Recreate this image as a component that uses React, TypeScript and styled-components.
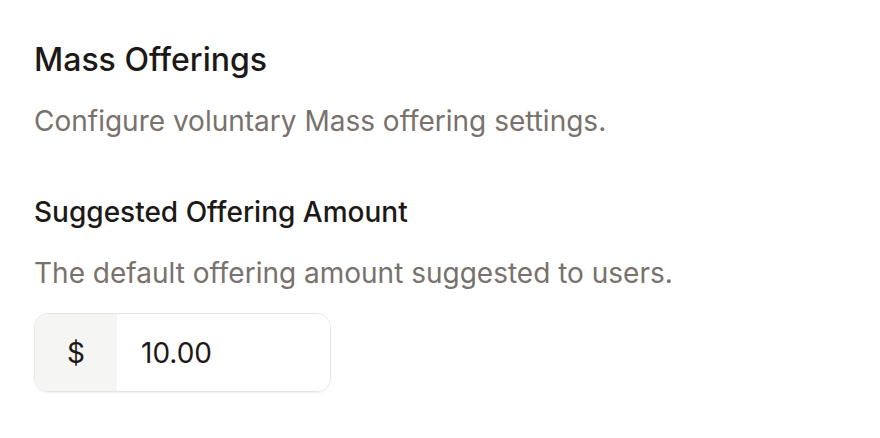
import styled, { createGlobalStyle } from 'styled-components';

const GlobalStyle = createGlobalStyle`
  html, body {
    margin: 0;
    padding: 0;
    background: #ffffff;
  }
  body {
    font-family: Inter, 'Noto Sans', sans-serif;
    -webkit-font-smoothing: antialiased;
  }
`;

const Section = styled.section`
  display: flex;
  flex-direction: column;
  padding: 40px 34px;
`;

const Title = styled.h2`
  margin: 0;
  font-size: 32px;
  line-height: 40px;
  font-weight: 500;
  color: #1c1917;
`;

const Description = styled.p`
  margin: 23px 0 0;
  font-size: 28px;
  line-height: 36px;
  font-weight: 400;
  color: #78716c;
`;

const Field = styled.div`
  display: flex;
  flex-direction: column;
  margin-top: 55px;
`;

const Label = styled.label`
  font-size: 28px;
  line-height: 36px;
  font-weight: 500;
  color: #1c1917;
`;

const Help = styled.p`
  margin: 25px 0 0;
  font-size: 28px;
  line-height: 36px;
  color: #78716c;
`;

const InputGroup = styled.div`
  display: flex;
  align-items: stretch;
  margin-top: 22px;
  width: 297px;
  height: 79px;
  box-sizing: border-box;
  border: 1.5px solid #e7e5e4;
  border-radius: 14px;
  overflow: hidden;
  box-shadow: 0 1px 2px rgba(28, 25, 23, 0.06);
`;

const Prefix = styled.span`
  display: flex;
  align-items: center;
  justify-content: center;
  width: 82px;
  background: #f5f5f4;
  font-size: 28px;
  color: #1c1917;
`;

const AmountInput = styled.input`
  flex: 1;
  min-width: 0;
  border: none;
  outline: none;
  padding: 0 24px;
  font-family: inherit;
  font-size: 28px;
  color: #1c1917;
  background: #ffffff;
`;

export default function App() {
  return (
    <>
      <GlobalStyle />
      <Section>
        <Title>Mass Offerings</Title>
        <Description>Configure voluntary Mass offering settings.</Description>
        <Field>
          <Label htmlFor='amount'>Suggested Offering Amount</Label>
          <Help>The default offering amount suggested to users.</Help>
          <InputGroup>
            <Prefix>$</Prefix>
            <AmountInput id='amount' defaultValue='10.00' />
          </InputGroup>
        </Field>
      </Section>
    </>
  );
}
